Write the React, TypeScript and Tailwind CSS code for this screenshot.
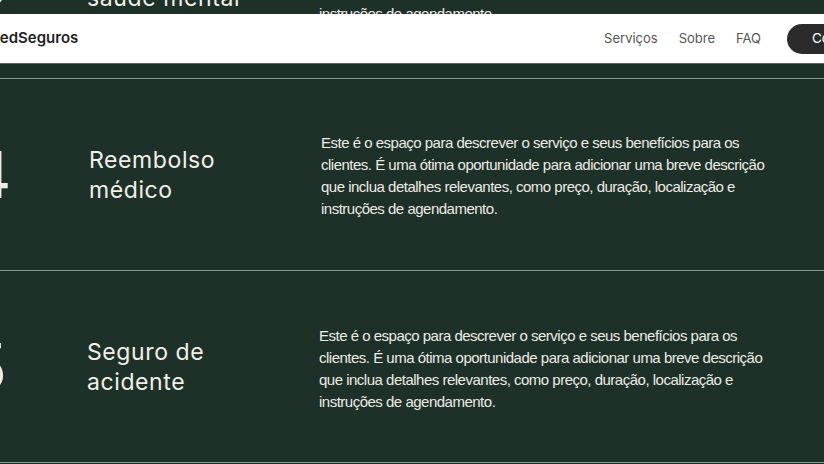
import React from 'react'

type Item = { n: string; title: string[]; shift: string; pad: string }

const DESC =
  'Este é o espaço para descrever o serviço e seus benefícios para os clientes. É uma ótima oportunidade para adicionar uma breve descrição que inclua detalhes relevantes, como preço, duração, localização e instruções de agendamento.'

const items: Item[] = [
  { n: '3', title: ['Apoio à', 'saúde mental'], shift: 'ml-[-34px]', pad: 'mt-[-4px]' },
  { n: '4', title: ['Reembolso', 'médico'], shift: 'ml-[-32px]', pad: 'pt-[3px]' },
  { n: '5', title: ['Seguro de', 'acidente'], shift: 'ml-[-34px]', pad: 'pt-[4px]' },
]

function Row({ it }: { it: Item }) {
  return (
    <div className="h-[192px] border-b border-[#8a9a92] flex items-center">
      <div className={`flex items-center ${it.shift}`}>
        <div className="w-[121px] shrink-0 pl-[2px] text-[64px] leading-none text-[#efece4]" style={{ fontFamily: 'Inter, sans-serif' }}>
          {it.n}
        </div>
        <div className="w-[232px] shrink-0 text-[23px] leading-[30px] tracking-[0.6px] text-[#f2f0e8]" style={{ fontFamily: 'Inter, sans-serif' }}>
          {it.title.map(t => <div key={t}>{t}</div>)}
        </div>
        <p className={`w-[452px] shrink-0 text-[15px] leading-[22px] tracking-[-0.5px] text-[#ecebe4] ${it.pad}`} style={{ fontFamily: '"Liberation Sans", Arial, sans-serif' }}>
          {DESC}
        </p>
      </div>
    </div>
  )
}

export default function App() {
  return (
    <div className="relative w-[824px] h-[464px] overflow-hidden bg-[#1e3128]">
      <div className="mt-[-113px]">
        {items.map(it => <Row key={it.n} it={it} />)}
      </div>

      {/* header fica fixo por cima do conteúdo */}
      <header className="absolute left-0 right-0 top-[14px] h-[50px] bg-white border-b border-[#5e6360] flex items-center" style={{ fontFamily: 'Inter, sans-serif' }}>
        <div className="ml-[-14px] text-[15px] font-semibold text-[#222]">MedSeguros</div>
        <nav className="ml-auto flex items-center gap-[21px] text-[13px] text-[#555]">
          <span>Serviços</span>
          <span>Sobre</span>
          <span>FAQ</span>
        </nav>
        <button className="ml-[26px] mr-[-71px] h-[30px] w-[108px] shrink-0 rounded-full bg-[#2b2b2b] text-white text-[13.5px] text-left pl-[25px]">
          Contato
        </button>
      </header>
    </div>
  )
}
